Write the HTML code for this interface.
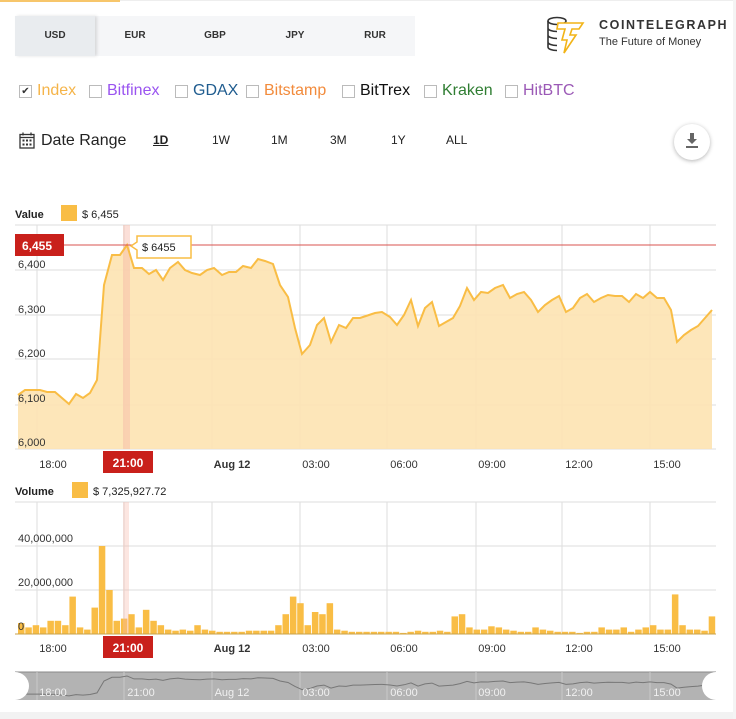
<!DOCTYPE html>
<html><head><meta charset="utf-8"><style>
*{margin:0;padding:0;box-sizing:border-box}
body{width:736px;height:719px;background:#fff;font-family:"Liberation Sans",sans-serif;position:relative;overflow:hidden;color:#222}
.abs{position:absolute}
.tabs{left:15px;top:16px;width:400px;height:40px;background:#f5f6f8;display:flex}
.tabs div{width:80px;text-align:center;line-height:40px;font-size:10px;font-weight:bold;color:#333}
.tabs .a{background:#e9ecef;box-shadow:2px 0 3px rgba(0,0,0,.12)}
.cb{top:82px;font-size:16px;display:flex;align-items:center;white-space:nowrap}
.cb i{display:inline-block;width:13px;height:13px;border:1px solid #bbb;margin-right:5px;font-style:normal;font-size:10px;line-height:11px;text-align:center;color:#333}
.dr{top:133px;font-size:12px;color:#222}
</style></head><body>
<div class="abs" style="left:0;top:0;width:120px;height:2px;background:#f7c66b"></div>
<div class="abs" style="left:120px;top:0;width:616px;height:1px;background:#eee"></div>
<div class="abs tabs"><div class="a">USD</div><div>EUR</div><div>GBP</div><div>JPY</div><div>RUR</div></div>
<svg class="abs" style="left:545px;top:15px" width="50" height="42" viewBox="0 0 50 42">
<g fill="none" stroke="#333" stroke-width="1.6"><ellipse cx="12" cy="6" rx="9" ry="3.5"/><path d="M3 6v26M3 13c0 2 4 3.5 9 3.5M3 20c0 2 4 3.5 9 3.5M3 27c0 2 4 3.5 9 3.5M3 32c0 2 4 3.5 9 3.5"/></g>
<path d="M13 8h25l-4 6h-7l-2 6h6l-12 18 3-13h-5l3-11h-8z" fill="#fff" stroke="#f2b417" stroke-width="1.6"/>
</svg>
<div class="abs" style="left:599px;top:18px;font-size:12.5px;font-weight:bold;letter-spacing:1.6px;color:#333">COINTELEGRAPH</div>
<div class="abs" style="left:599px;top:36px;font-size:11px;color:#333">The Future of Money</div>

<div class="abs cb" style="left:19px"><i>✔</i><span style="color:#f5b449">Index</span></div>
<div class="abs cb" style="left:89px"><i></i><span style="color:#9a54f0">Bitfinex</span></div>
<div class="abs cb" style="left:175px"><i></i><span style="color:#1f5c8f">GDAX</span></div>
<div class="abs cb" style="left:246px"><i></i><span style="color:#f28b3c">Bitstamp</span></div>
<div class="abs cb" style="left:342px"><i></i><span style="color:#111">BitTrex</span></div>
<div class="abs cb" style="left:424px"><i></i><span style="color:#2f7d32">Kraken</span></div>
<div class="abs cb" style="left:505px"><i></i><span style="color:#9b59b6">HitBTC</span></div>

<svg class="abs" style="left:19px;top:132px" width="16" height="17" viewBox="0 0 16 17"><rect x="1" y="2.5" width="14" height="13.5" fill="none" stroke="#333" stroke-width="1.3"/><path d="M1 5.5h14M4 0.5v3M12 0.5v3" stroke="#333" stroke-width="1.3"/><g fill="#333"><rect x="3.5" y="7.5" width="2" height="2"/><rect x="7" y="7.5" width="2" height="2"/><rect x="10.5" y="7.5" width="2" height="2"/><rect x="3.5" y="11.5" width="2" height="2"/><rect x="7" y="11.5" width="2" height="2"/><rect x="10.5" y="11.5" width="2" height="2"/></g></svg>
<div class="abs" style="left:41px;top:132px;font-size:16px;color:#222">Date Range</div>
<div class="abs dr" style="left:153px;text-decoration:underline;font-weight:bold">1D</div>
<div class="abs dr" style="left:212px">1W</div>
<div class="abs dr" style="left:271px">1M</div>
<div class="abs dr" style="left:330px">3M</div>
<div class="abs dr" style="left:391px">1Y</div>
<div class="abs dr" style="left:446px">ALL</div>
<div class="abs" style="left:674px;top:124px;width:36px;height:36px;border-radius:50%;background:#fff;box-shadow:0 1px 4px rgba(0,0,0,.3)"></div>
<svg class="abs" style="left:684px;top:132px" width="16" height="18"><path d="M6 1h4v6h3l-5 5-5-5h3z" fill="#666"/><rect x="2" y="14" width="12" height="2" fill="#666"/></svg>

<svg id="ch" class="abs" style="left:0;top:0" width="736" height="719" font-family="Liberation Sans, sans-serif"></svg>
<script>
var s='';
s+='<text x="15" y="218" font-size="11" font-weight="bold" fill="#222">Value</text><rect x="61" y="205" width="16" height="16" fill="#f9bd45"/><text x="82" y="218" font-size="11" fill="#222">$ 6,455</text>';
var gx=[37,124,212,300,387,476,562,650];
s+='<line x1="15" x2="716" y1="225" y2="225" stroke="#ddd"/>';
[270,315,359,405,449].forEach(function(y){s+='<line x1="15" x2="716" y1="'+y+'" y2="'+y+'" stroke="#ddd"/>';});
gx.forEach(function(x){s+='<line x1="'+x+'" x2="'+x+'" y1="225" y2="449" stroke="#ddd"/>';});
var p=[[18,395],[25,390],[40,390],[47,392],[55,392],[62,398],[69,404],[76,394],[83,398],[90,393],[97,380],[104,285],[112,255],[120,255],[127,245],[134,268],[142,268],[149,274],[156,270],[163,280],[170,268],[178,262],[185,270],[192,273],[200,275],[207,270],[214,268],[222,275],[229,272],[236,272],[243,266],[251,268],[258,259],[265,261],[273,264],[280,285],[288,297],[295,328],[302,354],[310,345],[317,325],[324,318],[331,342],[339,325],[346,328],[353,318],[360,318],[366,316],[375,313],[382,312],[390,317],[397,325],[404,315],[411,300],[418,326],[425,308],[432,302],[439,326],[446,322],[453,318],[460,306],[467,288],[474,300],[481,292],[488,293],[495,288],[503,285],[510,298],[517,294],[524,292],[531,300],[538,312],[545,305],[552,300],[559,296],[566,312],[573,308],[580,298],[587,294],[594,302],[601,298],[608,295],[615,296],[622,296],[629,302],[636,294],[643,298],[650,292],[657,298],[664,298],[671,310],[677,342],[684,335],[691,330],[698,326],[705,318],[712,310]];
var d=p.map(function(a){return a.join(',')}).join(' ');
s+='<polygon points="18,449 '+d+' 712,449" fill="#fde3b1" opacity=".9"/>';
s+='<rect x="123" y="225" width="7" height="224" fill="#f6b7a8" opacity=".45"/>';
s+='<polyline points="'+d+'" fill="none" stroke="#f9bd45" stroke-width="2"/>';
s+='<line x1="15" x2="716" y1="245" y2="245" stroke="#d9534f" stroke-width="1"/>';
s+='<rect x="15" y="234" width="49" height="22" fill="#c9201b"/><text x="22" y="250" font-size="12" font-weight="bold" fill="#fff">6,455</text>';
s+='<path d="M137 236h54v22h-54v-8l-6-4 6-4z" fill="#fff" stroke="#f9bd45" stroke-width="1.5"/><text x="142" y="251" font-size="11" fill="#222">$ 6455</text>';
[[6400,264],[6300,309],[6200,353],[6100,398],[6000,442]].forEach(function(a){s+='<text x="18" y="'+(a[1]+4)+'" font-size="11" fill="#333">'+a[0].toLocaleString('en-US')+'</text>';});
var lb=[['18:00',53],['Aug 12',232,1],['03:00',316],['06:00',404],['09:00',492],['12:00',579],['15:00',667]];
lb.forEach(function(a){s+='<text x="'+a[1]+'" y="468" font-size="11" text-anchor="middle" fill="#333"'+(a[2]?' font-weight="bold"':'')+'>'+a[0]+'</text>';});
s+='<rect x="103" y="451" width="50" height="22" fill="#c9201b"/><text x="128" y="467" font-size="12" font-weight="bold" text-anchor="middle" fill="#fff">21:00</text>';
s+='<text x="15" y="495" font-size="11" font-weight="bold" fill="#222">Volume</text><rect x="72" y="482" width="16" height="16" fill="#f9bd45"/><text x="93" y="495" font-size="11" fill="#222">$ 7,325,927.72</text>';
[502,546,590].forEach(function(y){s+='<line x1="15" x2="716" y1="'+y+'" y2="'+y+'" stroke="#ddd"/>';});
gx.forEach(function(x){s+='<line x1="'+x+'" x2="'+x+'" y1="502" y2="634" stroke="#ddd"/>';});
var v=[5,3,4,3,6,6,4,17,3,2,12,40,20,6,7,9,3,11,6,4,2,1.5,2,1.5,4,2,1.5,1,1,1,1,1.5,1.5,1.5,1.5,4,9,17,14,4,10,9,14,2,1.5,1,1,1,1,1,1,1,0.5,1,1.5,1,1,1.5,1,8,9,3,2,2,3.5,3,2,1.5,1,1,3,2,1.5,1,1,1,0.5,1,1,3,2,2,3,1,2,3,4,2,2,18,4,2,2,1.5,8];
var w=(716-18)/v.length;
v.forEach(function(h,i){var hh=h*2.2;s+='<rect x="'+(18+i*w).toFixed(1)+'" y="'+(634-hh).toFixed(1)+'" width="'+(w-0.8).toFixed(1)+'" height="'+hh.toFixed(1)+'" fill="#f9bd45"/>';});
s+='<rect x="123" y="502" width="6" height="132" fill="#f6b7a8" opacity=".35"/>';
s+='<line x1="15" x2="716" y1="634" y2="634" stroke="#c8a24a"/>';
[['40,000,000',546],['20,000,000',590],['0',634]].forEach(function(a){s+='<text x="18" y="'+(a[1]-4)+'" font-size="11" fill="#333">'+a[0]+'</text>';});
lb.forEach(function(a){s+='<text x="'+a[1]+'" y="652" font-size="11" text-anchor="middle" fill="#333"'+(a[2]?' font-weight="bold"':'')+'>'+a[0]+'</text>';});
s+='<rect x="103" y="636" width="50" height="22" fill="#c9201b"/><text x="128" y="652" font-size="12" font-weight="bold" text-anchor="middle" fill="#fff">21:00</text>';
s+='<rect x="15" y="672" width="701" height="28" fill="#b3b3b3"/><line x1="15" x2="716" y1="672" y2="672" stroke="#888"/>';
gx.forEach(function(x){s+='<line x1="'+x+'" x2="'+x+'" y1="672" y2="700" stroke="#c8c8c8"/>';});
var nav=p.map(function(a){return a[0]+','+(676+(a[1]-245)/160*20).toFixed(1)}).join(' ');
s+='<polyline points="'+nav+'" fill="none" stroke="#777" stroke-width="1"/>';
lb.forEach(function(a){s+='<text x="'+a[1]+'" y="696" font-size="11" text-anchor="middle" fill="#f0f0f0">'+a[0]+'</text>';});
s+='<text x="141" y="696" font-size="11" text-anchor="middle" fill="#f0f0f0">21:00</text>';
s+='<path d="M15 672a14 14 0 0 1 0 28" fill="#fff"/><path d="M716 672a14 14 0 0 0 0 28" fill="#fff"/>';
s+='<rect x="0" y="712" width="736" height="7" fill="#f2f2f2"/><rect x="733" y="0" width="3" height="719" fill="#f4f4f4"/>';
document.getElementById('ch').innerHTML=s;
</script>
</body></html>
